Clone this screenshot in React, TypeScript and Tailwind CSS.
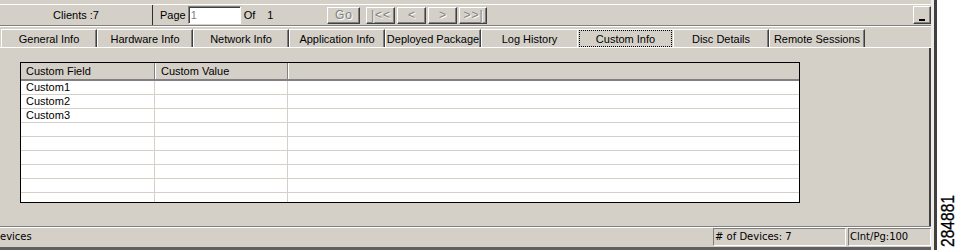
import React from "react";

const tabs = [
  "General Info",
  "Hardware Info",
  "Network Info",
  "Application Info",
  "Deployed Package",
  "Log History",
  "Custom Info",
  "Disc Details",
  "Remote Sessions",
];

function NavButton({ label, w }: { label: string; w: string }) {
  return (
    <div
      className={`${w} flex h-[17px] items-center justify-center border-l border-t border-l-white border-t-white border-r border-b border-r-[#404040] border-b-[#404040] shadow-[inset_-1px_-1px_0_#808080] text-[12px] tracking-[1px] text-[#808080] [text-shadow:1px_1px_0_#ffffff]`}
    >
      {label}
    </div>
  );
}

export default function App() {
  const rows = ["Custom1", "Custom2", "Custom3", "", "", "", "", ""];
  return (
    <div className="flex h-[250px] w-[956px] bg-white font-['Liberation_Sans',Arial,sans-serif] text-[11px] leading-none text-black">
      <div className="flex w-[937px] shrink-0 border-r-[3px] border-r-[#404040]">
        <div className="flex w-[934px] flex-col border-r-[3px] border-r-[#ecebe7] bg-[#d4d0c8]">
          {/* top spacer */}
          <div className="h-[4px]" />
          {/* toolbar row */}
          <div className="flex h-[22px] items-stretch border-t border-b border-t-white border-b-[#808080]">
            <div className="flex w-[152px] items-center justify-center">Clients :7</div>
            <div className="w-px bg-[#303030]" />
            <div className="flex flex-1 items-center">
              <span className="ml-[7px]">Page</span>
              <div className="ml-[2px] flex h-[18px] w-[53px] items-center border-l border-t border-l-[#808080] border-t-[#808080] border-r border-b border-r-white border-b-white bg-white pl-[2px] text-[#808080] shadow-[inset_1px_1px_0_#404040]">
                1
              </div>
              <span className="ml-[3px]">Of</span>
              <span className="ml-[12px]">1</span>
              <div className="ml-[54px] flex items-center gap-[2px]">
                <NavButton label="Go" w="w-[33px]" />
                <div className="w-[2px]" />
                <NavButton label="|<<" w="w-[29px]" />
                <NavButton label="<" w="w-[29px]" />
                <NavButton label=">" w="w-[29px]" />
                <NavButton label=">>|" w="w-[28px]" />
              </div>
              <div className="ml-auto flex h-[18px] w-[18px] items-end justify-center border-l border-t border-l-white border-t-white border-r border-b border-r-[#404040] border-b-[#404040] pb-[2px] shadow-[inset_-1px_-1px_0_#808080]">
                <div className="h-[2px] w-[6px] bg-black" />
              </div>
            </div>
          </div>
          <div className="h-px bg-white" />
          {/* tabs */}
          <div className="mt-[2px] flex h-[18px] pl-px">
            {tabs.map((t) => {
              if (t === "Custom Info") {
                return (
                  <div key={t} className="flex w-[96px] border-l border-t border-white pr-px">
                    <div className="ml-px flex flex-1 items-center justify-center border border-dotted border-black pt-px">
                      {t}
                    </div>
                  </div>
                );
              }
              if (t === "Log History") {
                return (
                  <div key={t} className="flex w-[96px] items-center justify-center border-l border-t border-white pt-px">
                    {t}
                  </div>
                );
              }
              return (
                <div
                  key={t}
                  className="flex w-[96px] items-center justify-center border-l border-t border-l-white border-t-white border-r border-r-[#404040] pt-px shadow-[inset_-1px_0_0_#808080]"
                >
                  {t}
                </div>
              );
            })}
          </div>
          <div className="h-px bg-white" />
          {/* panel */}
          <div className="flex-1 border-r-2 border-r-[#404040] pl-[20px] pt-[14px]">
            <div className="flex h-[141px] w-[780px] flex-col overflow-hidden border border-black bg-white">
              <div className="flex h-[18px] shrink-0 border-b-2 border-b-[#808080] bg-[#d4d0c8]">
                <div className="flex w-[134px] items-center border-r border-r-[#808080] pl-[5px]">Custom Field</div>
                <div className="flex w-[133px] items-center border-l border-l-white border-r border-r-[#808080] pl-[5px]">
                  Custom Value
                </div>
                <div className="flex-1 border-l border-l-white" />
              </div>
              {rows.map((r, i) => (
                <div key={i} className="flex h-[14px] shrink-0 border-b border-b-[#d4d0c8]">
                  <div className="flex w-[134px] items-center border-r border-r-[#d4d0c8] pl-[5px]">{r}</div>
                  <div className="w-[133px] border-r border-r-[#d4d0c8]" />
                  <div className="flex-1" />
                </div>
              ))}
              <div className="flex flex-1">
                <div className="w-[134px] border-r border-r-[#d4d0c8]" />
                <div className="w-[133px] border-r border-r-[#d4d0c8]" />
                <div className="flex-1" />
              </div>
            </div>
          </div>
          {/* status bar */}
          <div className="flex h-[24px] flex-col border-t border-t-[#808080] border-b-[3px] border-b-[#606060] font-['DejaVu_Sans',sans-serif] text-[10px]">
            <div className="h-px bg-white" />
            <div className="flex h-[18px]">
              <div className="flex w-[711px] items-center">evices</div>
              <div className="ml-[2px] flex w-[133px] items-center border-l border-t border-l-[#808080] border-t-[#808080] border-r border-b border-r-white border-b-white pl-px">
                # of Devices: 7
              </div>
              <div className="ml-[2px] flex w-[83px] items-center border-l border-t border-l-[#808080] border-t-[#808080] border-r border-b border-r-white border-b-white pl-px">
                Clnt/Pg:100
              </div>
            </div>
          </div>
        </div>
      </div>
      <div className="relative flex-1">
        <div className="absolute left-[10px] top-[221px] -translate-x-1/2 -translate-y-1/2 -rotate-90 scale-x-[0.82] whitespace-nowrap text-[19px] leading-none text-black [-webkit-text-stroke:0.3px_black]">
          284881
        </div>
      </div>
    </div>
  );
}
